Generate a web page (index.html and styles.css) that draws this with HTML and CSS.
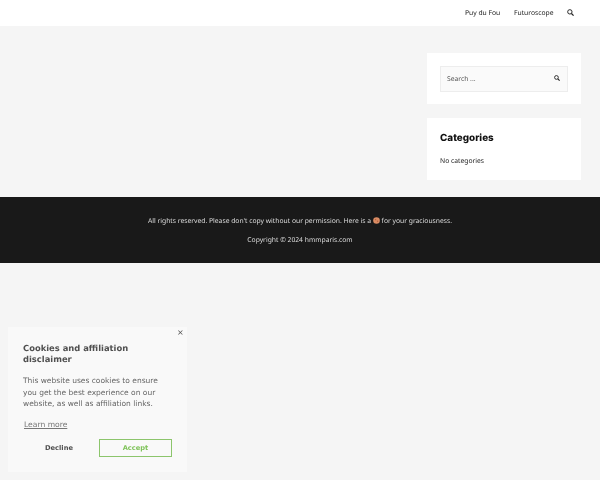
FILE: index.html
```html
<!DOCTYPE html>
<html lang="en">
<head>
<meta charset="utf-8">
<title>hmmparis</title>
<link rel="stylesheet" href="styles.css">
</head>
<body>
<header class="topbar">
  <nav class="nav">
    <a class="nav-link txt">Puy du Fou</a>
    <a class="nav-link txt">Futuroscope</a>
    <svg class="nav-search" viewBox="0 0 16 16" width="7" height="7"><circle cx="6.5" cy="6.5" r="5" fill="none" stroke="#222" stroke-width="2.2"/><path d="M10.2 10.2 15 15" stroke="#222" stroke-width="2.8" fill="none"/></svg>
  </nav>
</header>
<main class="main">
  <aside class="sidebar">
    <section class="card card-search">
      <div class="search-box">
        <span class="search-text txt">Search ...</span>
        <svg class="search-icon" viewBox="0 0 16 16" width="6" height="6"><circle cx="6.5" cy="6.5" r="5" fill="none" stroke="#222" stroke-width="2.4"/><path d="M10.2 10.2 15 15" stroke="#222" stroke-width="3" fill="none"/></svg>
      </div>
    </section>
    <section class="card card-cats">
      <h2 class="card-title txt">Categories</h2>
      <p class="card-text txt">No categories</p>
    </section>
  </aside>
</main>
<footer class="footer">
  <p class="footer-line txt">All rights reserved. Please don't copy without our permission. Here is a <svg class="cookie" viewBox="0 0 8 8" width="7" height="7"><circle cx="4" cy="4" r="3.8" fill="#d98b63"/><circle cx="3" cy="3" r=".8" fill="#b5603c"/><circle cx="5.2" cy="4.8" r=".8" fill="#b5603c"/></svg> for your graciousness.</p>
  <p class="footer-line txt">Copyright © 2024 hmmparis.com</p>
</footer>
<div class="consent">
  <span class="consent-close txt">×</span>
  <h3 class="consent-title txt">Cookies and affiliation disclaimer</h3>
  <p class="consent-text txt">This website uses cookies to ensure you get the best experience on our website, as well as affiliation links.</p>
  <a class="consent-link txt">Learn more</a>
  <div class="consent-actions">
    <span class="btn btn-decline txt">Decline</span>
    <span class="btn btn-accept txt">Accept</span>
  </div>
</div>
</body>
</html>
```
FILE: styles.css
```css
* { box-sizing: border-box; }
html, body { margin: 0; height: 100%; }
body { background: #f5f5f5; font-family: "Noto Sans", sans-serif; font-size: 6.75px; color: #333; overflow: hidden; text-rendering: geometricPrecision; }
.txt { will-change: transform; }
.topbar { height: 26px; background: #fff; display: flex; justify-content: flex-end; }
.nav { display: flex; align-items: center; gap: 13.5px; padding-right: 26px; height: 26px; }
.nav-link { color: #222; line-height: 26px; }
.nav-search { display: block; margin-top: -1px; }
.main { padding: 26.5px 19px 17px 427px; height: 171px; }
.sidebar { display: flex; flex-direction: column; gap: 14px; width: 154px; }
.card { background: #fff; padding: 13px 13px 13px 12.6px; }
.card-search { height: 51.5px; }
.search-box { height: 26px; background: #fafafa; border: 1px solid #ededed; display: flex; align-items: center; justify-content: space-between; padding: 0 7px 0 6.5px; }
.search-text { color: #555; }
.search-icon { display: block; margin-top: -1px; }
.card-cats { height: 62px; }
.card-title { margin: 0; font-family: Inter, sans-serif; font-size: 9.9px; line-height: 14px; font-weight: 800; color: #111; }
.card-text { margin: 9.5px 0 0; line-height: 12px; color: #222; }
.footer { height: 66px; background: #191919; color: #ddd; text-align: center; padding-top: 17.5px; display: flex; flex-direction: column; gap: 7px; }
.footer-line { margin: 0; line-height: 12px; }
.cookie { display: inline-block; vertical-align: -1px; }
.consent { position: fixed; left: 8px; bottom: 8px; width: 179px; height: 145px; background: #f9f9f9; padding: 15.5px 15px 0; font-family: "DejaVu Sans", sans-serif; color: #666; }
.consent-close { position: absolute; right: 3px; top: 0; font-size: 8px; line-height: 12px; color: #555; }
.consent-title { margin: 0; font-size: 8.4px; line-height: 11.2px; font-weight: 700; color: #505050; }
.consent-text { margin: 10.1px 0 0; font-size: 7.5px; line-height: 11.5px; color: #666; }
.consent-link { display: block; margin: 9px 0 0 1px; font-size: 7.6px; line-height: 11px; text-decoration: underline; color: #777; }
.consent-actions { display: flex; margin-top: 9.5px; align-items: center; gap: 4px; }
.btn { display: block; font-size: 6.7px; font-weight: 700; height: 18px; line-height: 16px; text-align: center; }
.btn-decline { width: 72px; color: #505050; border: 1px solid transparent; }
.btn-accept { width: 73px; color: #7fc35a; border: 1px solid #8cc56c; }
```
